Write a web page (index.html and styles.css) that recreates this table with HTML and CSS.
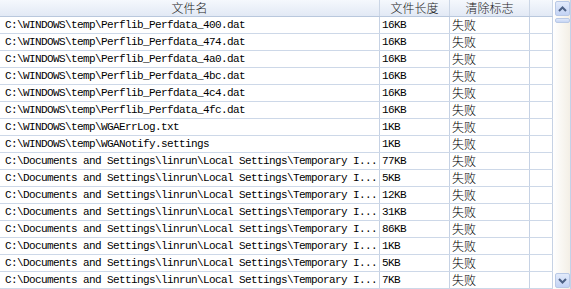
FILE: index.html
```html
<!DOCTYPE html>
<html>
<head>
<meta charset="utf-8">
<link rel="stylesheet" href="styles.css">
</head>
<body>
<div class="list">
  <div class="table">
    <div class="row head">
      <div class="cell">文件名</div>
      <div class="cell">文件长度</div>
      <div class="cell">清除标志</div>
      <div class="cell"></div>
    </div>
    <div class="row"><div class="cell">C:\WINDOWS\temp\Perflib_Perfdata_400.dat</div><div class="cell">16KB</div><div class="cell cn">失败</div><div class="cell"></div></div>
    <div class="row"><div class="cell">C:\WINDOWS\temp\Perflib_Perfdata_474.dat</div><div class="cell">16KB</div><div class="cell cn">失败</div><div class="cell"></div></div>
    <div class="row"><div class="cell">C:\WINDOWS\temp\Perflib_Perfdata_4a0.dat</div><div class="cell">16KB</div><div class="cell cn">失败</div><div class="cell"></div></div>
    <div class="row"><div class="cell">C:\WINDOWS\temp\Perflib_Perfdata_4bc.dat</div><div class="cell">16KB</div><div class="cell cn">失败</div><div class="cell"></div></div>
    <div class="row"><div class="cell">C:\WINDOWS\temp\Perflib_Perfdata_4c4.dat</div><div class="cell">16KB</div><div class="cell cn">失败</div><div class="cell"></div></div>
    <div class="row"><div class="cell">C:\WINDOWS\temp\Perflib_Perfdata_4fc.dat</div><div class="cell">16KB</div><div class="cell cn">失败</div><div class="cell"></div></div>
    <div class="row"><div class="cell">C:\WINDOWS\temp\WGAErrLog.txt</div><div class="cell">1KB</div><div class="cell cn">失败</div><div class="cell"></div></div>
    <div class="row"><div class="cell">C:\WINDOWS\temp\WGANotify.settings</div><div class="cell">1KB</div><div class="cell cn">失败</div><div class="cell"></div></div>
    <div class="row"><div class="cell">C:\Documents and Settings\linrun\Local Settings\Temporary I...</div><div class="cell">77KB</div><div class="cell cn">失败</div><div class="cell"></div></div>
    <div class="row"><div class="cell">C:\Documents and Settings\linrun\Local Settings\Temporary I...</div><div class="cell">5KB</div><div class="cell cn">失败</div><div class="cell"></div></div>
    <div class="row"><div class="cell">C:\Documents and Settings\linrun\Local Settings\Temporary I...</div><div class="cell">12KB</div><div class="cell cn">失败</div><div class="cell"></div></div>
    <div class="row"><div class="cell">C:\Documents and Settings\linrun\Local Settings\Temporary I...</div><div class="cell">31KB</div><div class="cell cn">失败</div><div class="cell"></div></div>
    <div class="row"><div class="cell">C:\Documents and Settings\linrun\Local Settings\Temporary I...</div><div class="cell">86KB</div><div class="cell cn">失败</div><div class="cell"></div></div>
    <div class="row"><div class="cell">C:\Documents and Settings\linrun\Local Settings\Temporary I...</div><div class="cell">1KB</div><div class="cell cn">失败</div><div class="cell"></div></div>
    <div class="row"><div class="cell">C:\Documents and Settings\linrun\Local Settings\Temporary I...</div><div class="cell">5KB</div><div class="cell cn">失败</div><div class="cell"></div></div>
    <div class="row"><div class="cell">C:\Documents and Settings\linrun\Local Settings\Temporary I...</div><div class="cell">7KB</div><div class="cell cn">失败</div><div class="cell"></div></div>
  </div>
  <div class="scrollbar">
    <div class="btn up"><svg width="9" height="6" viewBox="0 0 9 6"><path d="M1 5 L4.5 1.5 L8 5" fill="none" stroke="#4d6185" stroke-width="2"/></svg></div>
    <div class="thumb"></div>
    <div class="track"></div>
    <div class="btn down"><svg width="9" height="6" viewBox="0 0 9 6"><path d="M1 1 L4.5 4.5 L8 1" fill="none" stroke="#4d6185" stroke-width="2"/></svg></div>
  </div>
</div>
</body>
</html>
```

FILE: styles.css
```css
html, body {
  margin: 0;
  padding: 0;
  background: #ffffff;
}
.list {
  display: flex;
  width: 571px;
  height: 289px;
  overflow: hidden;
}
.table {
  width: 553px;
  display: flex;
  flex-direction: column;
}
.row {
  display: grid;
  grid-template-columns: 380px 70px 80px 23px;
  height: 17px;
  flex: none;
  border-bottom: 1px solid #cdd8e8;
  box-sizing: border-box;
  font-family: "Liberation Mono", "Noto Sans CJK SC", monospace;
  font-size: 11px;
  letter-spacing: -0.6px;
  color: #000;
}
.cell {
  border-right: 1px solid #c6d2e4;
  padding-left: 4px;
  line-height: 16px;
  white-space: nowrap;
  overflow: hidden;
}
.row .cell:first-child {
  padding-left: 5px;
}
.row .cell:nth-child(2) {
  padding-left: 2px;
}
.cn {
  font-family: "Noto Sans CJK SC", sans-serif;
  font-size: 12px;
  font-weight: 300;
  letter-spacing: 0;
  padding-left: 2px;
}
.head {
  background: linear-gradient(#f5f8fd, #e2e9f5);
  border-bottom: 1px solid #b9c8dd;
}
.head .cell {
  font-family: "Noto Sans CJK SC", sans-serif;
  font-size: 12px;
  font-weight: 300;
  letter-spacing: 0;
  text-align: center;
  padding: 0;
  line-height: 16px;
  overflow: visible;
  color: #1a1a1a;
  border-right-color: #cbd6e6;
}
.head .cell:first-child {
  padding: 0;
}
.head .cell:nth-child(2) {
  padding: 0;
}
.scrollbar {
  width: 18px;
  display: flex;
  flex-direction: column;
  align-items: center;
  background: linear-gradient(to right, #ffffff, #f3efe6);
  border-right: 1px solid #c3d2e8;
  box-sizing: border-box;
  padding: 1px 0 1px 1px;
}
.btn {
  width: 15px;
  height: 15px;
  border: 1px solid #b9c9e6;
  border-radius: 2px;
  box-sizing: border-box;
  background: linear-gradient(#e3ebfb, #c3d3f4);
  display: flex;
  align-items: center;
  justify-content: center;
  flex: none;
}
.thumb {
  width: 15px;
  height: 5px;
  margin-top: 2px;
  border: 1px solid #b9c9e6;
  border-radius: 2px;
  box-sizing: border-box;
  background: linear-gradient(#dfe8fa, #c6d5f4);
  flex: none;
}
.track {
  flex: 1;
}
```
